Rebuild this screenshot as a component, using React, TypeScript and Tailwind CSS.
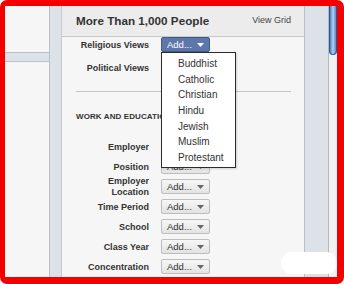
import React from "react";

const religions = ["Buddhist", "Catholic", "Christian", "Hindu", "Jewish", "Muslim", "Protestant"];

function Arrow({ color }: { color: string }) {
  return (
    <svg width="7" height="4" viewBox="0 0 7 4" className="ml-auto mr-[5px] shrink-0">
      <path d="M0 0H7L3.5 4Z" fill={color} />
    </svg>
  );
}

function AddButton({ active }: { active?: boolean }) {
  if (active) {
    return (
      <div className="flex h-[15px] w-[49px] items-center rounded-[2px] border border-[#3f5a8f] bg-[#5d77ab] pl-[5px] text-[9.5px] leading-none text-white">
        Add...
        <Arrow color="#ffffff" />
      </div>
    );
  }
  return (
    <div className="flex h-[15px] w-[49px] items-center rounded-[2px] border border-[#bdbdbd] bg-gradient-to-b from-[#f7f7f7] to-[#e3e3e3] pl-[5px] text-[9.5px] leading-none text-[#333]">
      Add...
      <Arrow color="#666666" />
    </div>
  );
}

// hidden = button sits fully under the open menu
function Row({ label, two, hidden }: { label: React.ReactNode; two?: boolean; hidden?: boolean }) {
  return (
    <div className="flex h-[20px] shrink-0 items-start">
      <div
        className={
          two
            ? "-mt-[3px] w-[73px] text-right text-[9px] font-bold leading-[10.5px] text-[#333]"
            : "mt-[3px] w-[73px] text-right text-[9px] font-bold leading-[11px] text-[#333]"
        }
      >
        {label}
      </div>
      <div className="ml-[12px]">{hidden ? <div className="h-[15px] w-[49px]" /> : <AddButton />}</div>
    </div>
  );
}

export default function App() {
  return (
    <div className="h-[284px] w-[344px] bg-white font-['Liberation_Sans',Arial,sans-serif]">
      <div className="relative flex h-full overflow-hidden rounded-[7px] border-b-[7px] border-l-[5px] border-r-[7px] border-t-[6px] border-solid border-[#f40000]">
        {/* left column */}
        <div className="flex w-[45px] shrink-0 flex-col">
          <div className="h-[47px] border-b border-r border-[#b9c0cb] bg-[#f6f6f6]" />
          <div className="h-[8px] border-r border-[#b9c0cb] bg-[#dde1e8]" />
          <div className="flex-1 border-r border-t border-[#b9c0cb] bg-[#f6f6f6]" />
        </div>
        <div className="w-[12px] shrink-0 border-r border-[#c3c9d3] bg-[#dde1e8]" />

        {/* main panel */}
        <div className="flex w-[242px] shrink-0 flex-col bg-[#f6f6f6]">
          <div className="flex h-[31px] shrink-0 items-center justify-between border-b border-[#c9c9c9] bg-[#ececec] pl-[14px] pr-[13px]">
            <span className="text-[11.7px] font-bold text-[#333]">More Than 1,000 People</span>
            <span className="text-[9px] text-[#444]">View Grid</span>
          </div>

          <div className="flex flex-col pl-[14px] pr-[13px]">
            <div className="flex h-[15px] shrink-0 items-start">
              <div className="mt-[3px] w-[73px] text-right text-[9px] font-bold leading-[11px] text-[#333]">
                Religious Views
              </div>
              <div className="relative ml-[12px]">
                <AddButton active />
                <div className="absolute left-0 top-[15px] z-10 w-[75px] border border-[#2b2b2b] bg-white pb-[1px] pt-[3px] shadow-[1px_1px_2px_rgba(0,0,0,0.15)]">
                  {religions.map((r) => (
                    <div key={r} className="h-[15.7px] pl-[16px] text-[10px] leading-[15.7px] text-[#333]">
                      {r}
                    </div>
                  ))}
                </div>
              </div>
            </div>

            <div className="mt-[8px] flex h-[15px] shrink-0 items-start">
              <div className="mt-[3px] w-[73px] text-right text-[9px] font-bold leading-[11px] text-[#333]">
                Political Views
              </div>
            </div>

            <div className="mt-[16px] border-t border-[#c4c4c4]" />

            <div className="mt-[20px] h-[10px] text-[8px] font-bold leading-[10px] tracking-[0.1px] text-[#333]">
              WORK AND EDUCATION
            </div>

            <div className="mt-[17px] flex flex-col">
              <Row label="Employer" hidden />
              <Row label="Position" />
              <Row
                two
                label={
                  <>
                    Employer
                    <br />
                    Location
                  </>
                }
              />
              <Row label="Time Period" />
              <Row label="School" />
              <Row label="Class Year" />
              <Row label="Concentration" />
            </div>
          </div>
        </div>

        {/* right strip + scrollbar */}
        <div className="w-[24px] shrink-0 border-l border-[#b9c0cb] bg-[#dde1e8]" />
        <div className="flex w-[9px] shrink-0 flex-col border-l border-[#b3b9c3] bg-[#f2f2f2]">
          <div className="h-[49px] rounded-b-[4px] border-x border-b border-[#2c5597] bg-gradient-to-r from-[#4f7cbf] via-[#b4d0f2] to-[#5a86c8]" />
        </div>

        <div className="absolute left-[276px] top-[246px] h-[22px] w-[56px] rounded-[11px] bg-white" />
      </div>
    </div>
  );
}
